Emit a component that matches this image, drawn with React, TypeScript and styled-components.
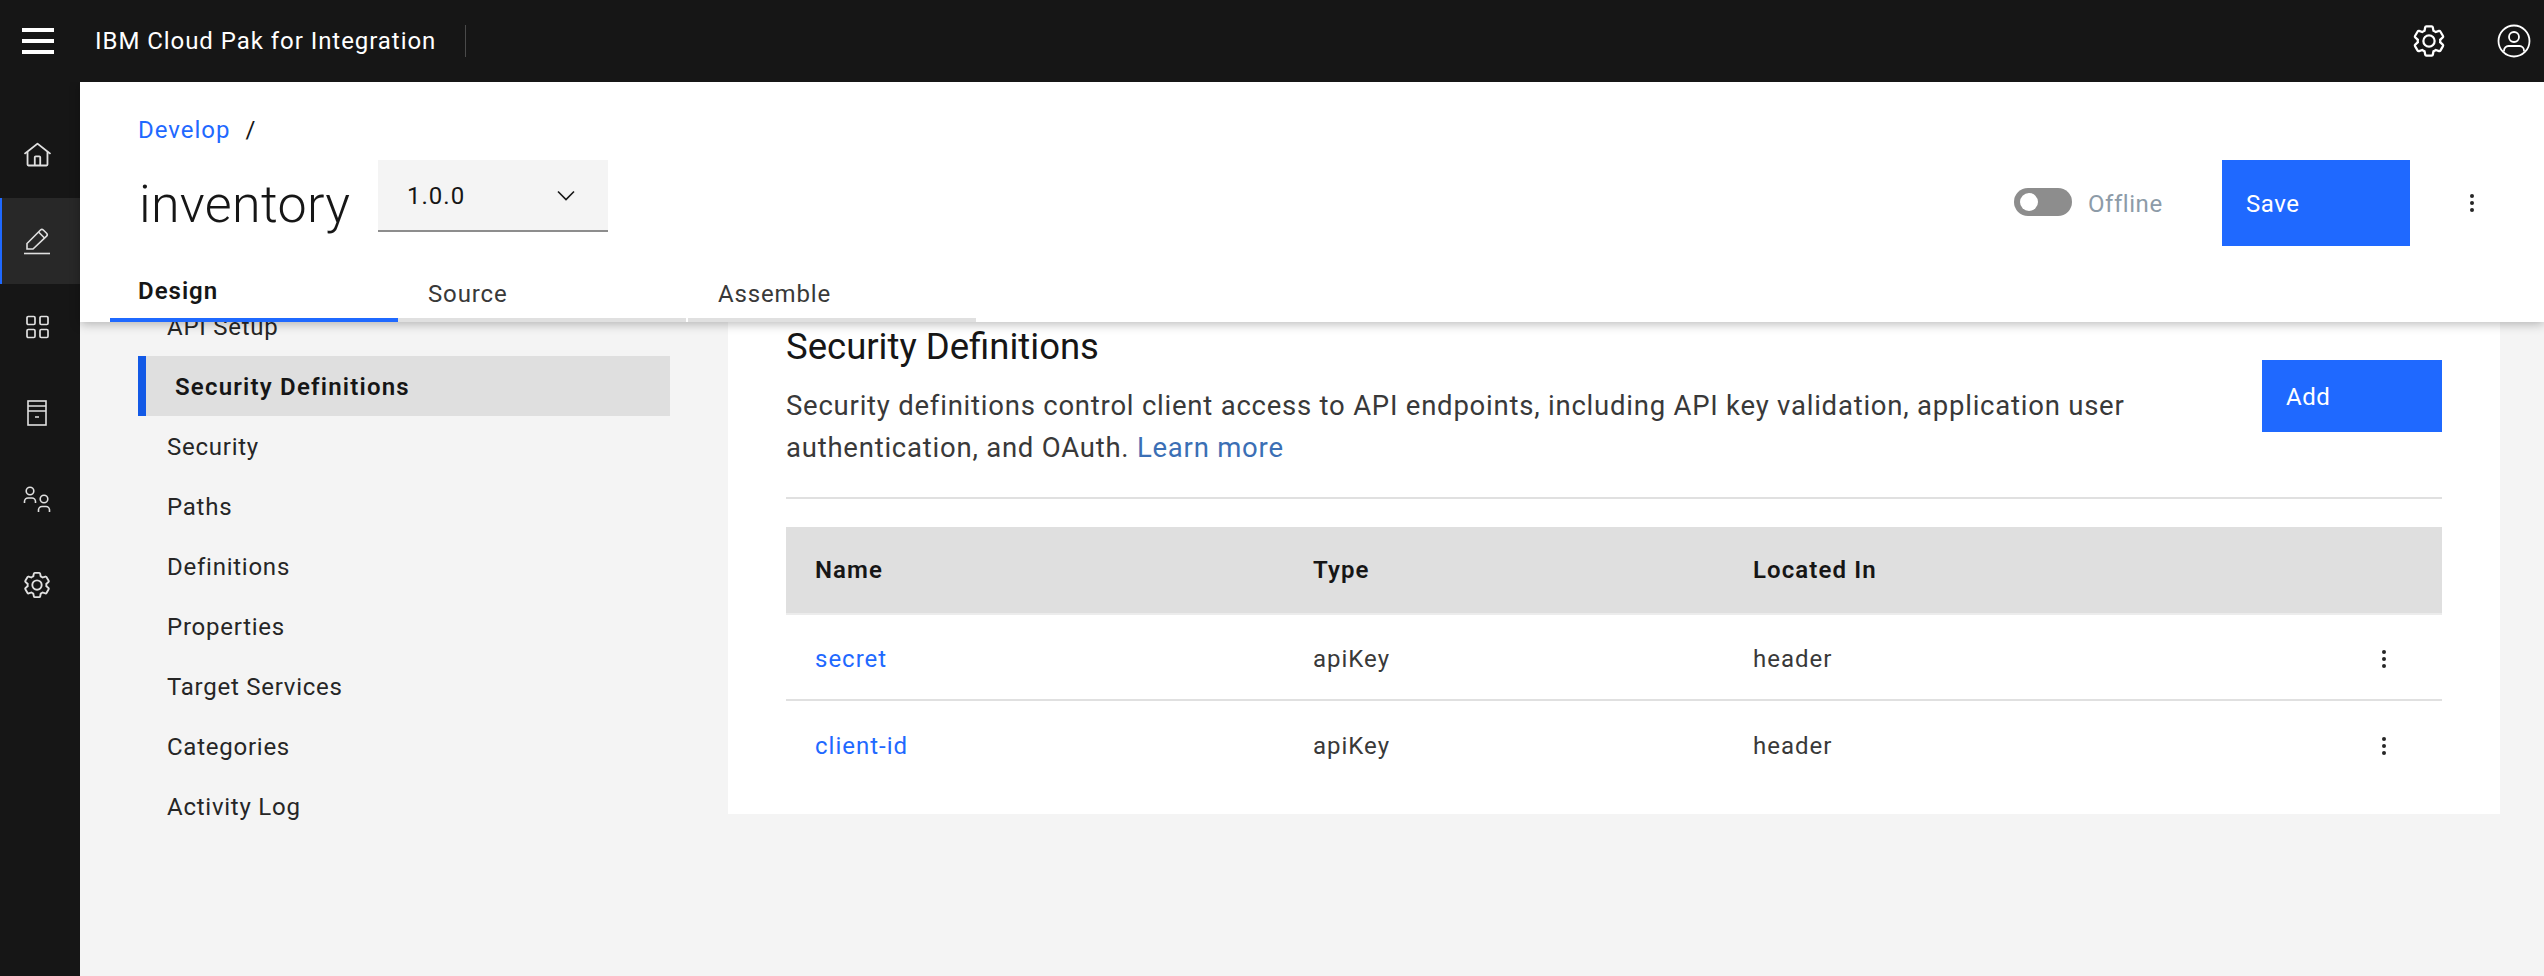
import React from "react";
import styled, { createGlobalStyle } from "styled-components";

const BLUE = "#1f69ff";

const Global = createGlobalStyle`
    html, body { margin: 0; padding: 0; background: #f4f4f4; }
    body { font-family: Roboto, "Liberation Sans", sans-serif; color: #161616; }
    * { box-sizing: border-box; }
`;

const Shell = styled.div`
    width: 2544px;
    height: 976px;
    display: flex;
    flex-direction: column;
    overflow: hidden;
`;

const TopBar = styled.header`
    height: 82px;
    flex: none;
    display: flex;
    align-items: center;
    background: #161616;
    color: #fff;
    position: relative;
    z-index: 3;
`;

const Burger = styled.div`
    width: 32px;
    height: 26px;
    margin: 0 41px 0 22px;
    display: flex;
    flex-direction: column;
    justify-content: space-between;
    span {
        height: 4px;
        background: #fff;
    }
`;

const Product = styled.div`
    width: 371px;
    font-size: 24px;
    letter-spacing: 0.95px;
    font-weight: 400;
    height: 32px;
    line-height: 32px;
    border-right: 1px solid #4a4a4a;
`;

const TopIcons = styled.div`
    margin-left: auto;
    display: flex;
    align-items: center;
    gap: 50px;
    padding-right: 13px;
`;

const Columns = styled.div`
    flex: 1;
    display: flex;
    min-height: 0;
`;

const Rail = styled.nav`
    width: 80px;
    flex: none;
    background: #161616;
    padding-top: 30px;
`;

const RailItem = styled.div<{ $active?: boolean }>`
    height: 86px;
    display: flex;
    align-items: center;
    justify-content: center;
    padding-right: 8px;
    color: #e0e0e0;
    background: ${(p) => (p.$active ? "#282828" : "transparent")};
    border-left: 2px solid ${(p) => (p.$active ? BLUE : "transparent")};
`;

const Main = styled.main`
    flex: 1;
    min-width: 0;
    background: #f4f4f4;
    display: flex;
    flex-direction: column;
`;

const PageHeader = styled.section`
    height: 240px;
    flex: none;
    background: #fff;
    box-shadow: 0 2px 10px rgba(0, 0, 0, 0.28);
    position: relative;
    z-index: 2;
    display: flex;
    flex-direction: column;
`;

const Crumbs = styled.div`
    margin: 33px 0 0 58px;
    height: 30px;
    line-height: 31px;
    font-size: 24px;
    letter-spacing: 1px;
    display: flex;
    gap: 15px;
    a {
        color: ${BLUE};
    }
`;

const TitleRow = styled.div`
    margin: 15px 0 0 59px;
    height: 86px;
    display: flex;
    align-items: flex-start;
`;

const PageTitle = styled.h1`
    margin: 0;
    width: 180px;
    font-size: 52px;
    letter-spacing: 0.3px;
    font-weight: 300;
    line-height: 86px;
    height: 86px;
    position: relative;
    top: 2px;
    color: #161616;
    white-space: nowrap;
`;

const VersionSelect = styled.div`
    margin-left: 59px;
    width: 230px;
    height: 72px;
    background: #f4f4f4;
    border-bottom: 2px solid #8d8d8d;
    padding: 2px 33px 0 29px;
    display: flex;
    align-items: center;
    justify-content: space-between;
    font-size: 24px;
    letter-spacing: 1px;
    color: #161616;
`;

const Actions = styled.div`
    margin-left: auto;
    display: flex;
    align-items: flex-start;
`;

const Toggle = styled.div`
    width: 58px;
    height: 28px;
    margin-top: 28px;
    border-radius: 14px;
    background: #8d8d8d;
    padding: 5px 6px;
    span {
        display: block;
        width: 18px;
        height: 18px;
        border-radius: 50%;
        background: #fff;
    }
`;

const ToggleLabel = styled.div`
    margin: 1px 59px 0 16px;
    width: 75px;
    line-height: 86px;
    height: 85px;
    font-size: 24px;
    letter-spacing: 0.55px;
    color: #8d9ba8;
    white-space: nowrap;
`;

const PrimaryButton = styled.div<{ $width: number; $height: number }>`
    width: ${(p) => p.$width}px;
    height: ${(p) => p.$height}px;
    background: ${BLUE};
    color: #fff;
    font-size: 24px;
    letter-spacing: 0.55px;
    display: flex;
    align-items: center;
    padding: 2px 0 0 24px;
    flex: none;
`;

const HeaderMenu = styled.div`
    width: 134px;
    height: 86px;
    display: flex;
    align-items: center;
    padding-left: 59px;
`;

const Tabs = styled.div`
    margin: auto 0 0 30px;
    display: flex;
    gap: 0;
`;

const Tab = styled.div<{ $active?: boolean; $gap?: boolean }>`
    width: 288px;
    height: 56px;
    margin-left: ${(p) => (p.$gap ? 2 : 0)}px;
    padding-left: ${(p) => (p.$active ? 28 : 30)}px;
    border-bottom: 4px solid ${(p) => (p.$active ? BLUE : "#e0e0e0")};
    line-height: ${(p) => (p.$active ? 50 : 56)}px;
    font-size: 24px;
    letter-spacing: ${(p) => (p.$active ? 1 : 0.85)}px;
    font-weight: ${(p) => (p.$active ? 600 : 400)};
    color: ${(p) => (p.$active ? "#161616" : "#393939")};
`;

const Body = styled.div`
    flex: 1;
    display: flex;
    align-items: flex-start;
    gap: 58px;
    padding: 0 44px 0 58px;
`;

const SideNav = styled.ul`
    list-style: none;
    margin: -26px 0 0;
    padding: 0;
    width: 532px;
    flex: none;
`;

const SideItem = styled.li<{ $active?: boolean }>`
    height: 60px;
    line-height: 62px;
    font-size: 24px;
    letter-spacing: ${(p) => (p.$active ? 1.2 : 0.75)}px;
    color: ${(p) => (p.$active ? "#161616" : "#262626")};
    font-weight: ${(p) => (p.$active ? 600 : 400)};
    padding-left: 29px;
    background: ${(p) => (p.$active ? "#dfdfdf" : "transparent")};
    border-left: ${(p) => (p.$active ? `8px solid #1259e6` : "none")};
`;

const Card = styled.section`
    flex: 1;
    min-width: 0;
    background: #fff;
    margin-top: -10px;
    height: 502px;
    padding: 13px 58px 0;
`;

const CardTop = styled.div`
    display: flex;
    justify-content: space-between;
    height: 174px;
    border-bottom: 2px solid #e0e0e0;
`;

const CardText = styled.div`
    width: 1360px;
`;

const CardTitle = styled.h2`
    margin: 0;
    font-size: 36.5px;
    font-weight: 400;
    line-height: 44px;
    color: #161616;
`;

const CardCopy = styled.p`
    margin: 16px 0 0;
    font-size: 27.5px;
    letter-spacing: 0.77px;
    line-height: 42px;
    color: #393939;
    a {
        color: #3b6fb5;
    }
`;

const AddSlot = styled.div`
    margin-top: 35px;
`;

const Table = styled.div`
    margin-top: 28px;
`;

const Row = styled.div<{ $head?: boolean }>`
    display: grid;
    grid-template-columns: 498px 440px 1fr 161px;
    height: ${(p) => (p.$head ? 88 : 86)}px;
    align-items: center;
    font-size: 24px;
    letter-spacing: ${(p) => (p.$head ? 1.1 : 1)}px;
    color: ${(p) => (p.$head ? "#161616" : "#393939")};
    font-weight: ${(p) => (p.$head ? 600 : 400)};
    background: ${(p) => (p.$head ? "#dfdfdf" : "transparent")};
    border-bottom: 2px solid ${(p) => (p.$head ? "#ececec" : "#e0e0e0")};
    &:last-child {
        border-bottom: none;
    }
`;

const Cell = styled.div<{ $nudge?: boolean }>`
    padding-left: 29px;
    padding-top: ${(p) => (p.$nudge ? 4 : 0)}px;
    a {
        color: ${BLUE};
    }
`;

const RowMenu = styled.div`
    display: flex;
    padding: 4px 0 0 100px;
`;

function Kebab({ size = 4 }: { size?: number }) {
    return (
        <svg width="6" height="24" viewBox="0 0 6 24" fill="#262626">
            <circle cx="3" cy="5" r={size / 2} />
            <circle cx="3" cy="12" r={size / 2} />
            <circle cx="3" cy="19" r={size / 2} />
        </svg>
    );
}

const gear =
    "M27,16.76c0-.25,0-.5,0-.76s0-.51,0-.77l1.92-1.68A2,2,0,0,0,29.3,11L26.94,7a2,2,0,0,0-1.73-1,2,2,0,0,0-.64.1l-2.43.82a11.35,11.35,0,0,0-1.31-.75l-.51-2.52a2,2,0,0,0-2-1.61H13.64a2,2,0,0,0-2,1.61l-.51,2.52a11.48,11.48,0,0,0-1.32.75L7.43,6.06A2,2,0,0,0,6.79,6,2,2,0,0,0,5.06,7L2.7,11a2,2,0,0,0,.41,2.51L5,15.24c0,.25,0,.5,0,.76s0,.51,0,.77L3.11,18.45A2,2,0,0,0,2.7,21L5.06,25a2,2,0,0,0,1.73,1,2,2,0,0,0,.64-.1l2.43-.82a11.35,11.35,0,0,0,1.31.75l.51,2.52a2,2,0,0,0,2,1.61h4.72a2,2,0,0,0,2-1.61l.51-2.52a11.48,11.48,0,0,0,1.32-.75l2.42.82a2,2,0,0,0,.64.1,2,2,0,0,0,1.73-1L29.3,21a2,2,0,0,0-.41-2.51ZM25.21,24l-3.43-1.16a8.86,8.86,0,0,1-2.71,1.57L18.36,28H13.64l-.71-3.55a9.36,9.36,0,0,1-2.7-1.57L6.79,24,4.43,20l2.72-2.4a8.9,8.9,0,0,1,0-3.13L4.43,12,6.79,8l3.43,1.16a8.86,8.86,0,0,1,2.71-1.57L13.64,4h4.72l.71,3.55a9.36,9.36,0,0,1,2.7,1.57L25.21,8,27.57,12l-2.72,2.4a8.9,8.9,0,0,1,0,3.13L27.57,20ZM16,22a6,6,0,1,1,6-6A5.94,5.94,0,0,1,16,22Zm0-10a3.91,3.91,0,0,0-4,4,3.91,3.91,0,0,0,4,4,3.91,3.91,0,0,0,4-4A3.91,3.91,0,0,0,16,12Z";

function GearIcon({ size }: { size: number }) {
    return (
        <svg width={size} height={size} viewBox="0 0 32 32" fill="currentColor">
            <path d={gear} />
        </svg>
    );
}

function HomeIcon() {
    return (
        <svg width="29" height="29" viewBox="0 0 32 32" fill="currentColor">
            <path d="M16.6123,2.2138a1.01,1.01,0,0,0-1.2427,0L1,13.4194l1.2427,1.5717L4,13.6209V26a2.0041,2.0041,0,0,0,2,2H26a2.0037,2.0037,0,0,0,2-2V13.63L29.7573,15,31,13.4282ZM18,26H14V18h4Zm2,0V18a2.0023,2.0023,0,0,0-2-2H14a2.002,2.002,0,0,0-2,2v8H6V12.0615l10-7.79,10,7.8005V26Z" />
        </svg>
    );
}

function PencilIcon() {
    return (
        <svg width="28" height="28" viewBox="0 0 28 28" fill="none" stroke="currentColor" strokeWidth="1.6">
            <path d="M1 26.5h26" />
            <path d="M4 22v-5.5L17.5 3 a2 2 0 0 1 2.8 0 L23.6 6.3 a2 2 0 0 1 0 2.8 L10 22Z" />
            <path d="M15.5 5l6 6" />
        </svg>
    );
}

function GridIcon() {
    return (
        <svg width="24" height="24" viewBox="0 0 24 24" fill="none" stroke="currentColor" strokeWidth="1.7">
            <rect x="2" y="1.5" width="8" height="8" rx="1.2" />
            <rect x="15" y="1.5" width="8" height="8" rx="1.2" />
            <rect x="2" y="14.5" width="8" height="8" rx="1.2" />
            <rect x="15" y="14.5" width="8" height="8" rx="1.2" />
        </svg>
    );
}

function ArchiveIcon() {
    return (
        <svg width="24" height="26" viewBox="0 0 24 26" fill="none" stroke="currentColor" strokeWidth="1.6">
            <rect x="3" y="1" width="18" height="24" />
            <path d="M3 6h18M3 11h18M10 17h4" />
        </svg>
    );
}

function UsersIcon() {
    return (
        <svg width="30" height="28" viewBox="0 0 30 28" fill="none" stroke="currentColor" strokeWidth="1.6">
            <circle cx="8" cy="6" r="3.8" />
            <path d="M2.5 18v-1.5a3.5 3.5 0 0 1 3.5-3.5h4a3.5 3.5 0 0 1 3.5 3.5V18" />
            <circle cx="22" cy="14" r="3.8" />
            <path d="M16.5 27v-2a3.5 3.5 0 0 1 3.5-3.5h4a3.5 3.5 0 0 1 3.5 3.5v2" />
        </svg>
    );
}

function UserIcon() {
    return (
        <svg width="34" height="34" viewBox="0 0 34 34" fill="none" stroke="currentColor" strokeWidth="1.8">
            <circle cx="17" cy="17" r="15.5" />
            <circle cx="17" cy="13" r="5" />
            <path d="M7 27.5v-1a4.5 4.5 0 0 1 4.5-4.5h11a4.5 4.5 0 0 1 4.5 4.5v1" />
        </svg>
    );
}

function Chevron() {
    return (
        <svg width="18" height="12" viewBox="0 0 18 12" fill="none" stroke="#161616" strokeWidth="1.6">
            <path d="M1 1.5l8 8 8-8" />
        </svg>
    );
}

const sideItems = [
    "API Setup",
    "Security Definitions",
    "Security",
    "Paths",
    "Definitions",
    "Properties",
    "Target Services",
    "Categories",
    "Activity Log",
];

const rows = ["secret", "client-id"];

export default function App() {
    return (
        <Shell>
            <Global />
            <TopBar>
                <Burger>
                    <span />
                    <span />
                    <span />
                </Burger>
                <Product>IBM Cloud Pak for Integration</Product>
                <TopIcons>
                    <GearIcon size={36} />
                    <UserIcon />
                </TopIcons>
            </TopBar>
            <Columns>
                <Rail>
                    <RailItem><HomeIcon /></RailItem>
                    <RailItem $active><PencilIcon /></RailItem>
                    <RailItem><GridIcon /></RailItem>
                    <RailItem><ArchiveIcon /></RailItem>
                    <RailItem><UsersIcon /></RailItem>
                    <RailItem><GearIcon size={30} /></RailItem>
                </Rail>
                <Main>
                    <PageHeader>
                        <Crumbs>
                            <a>Develop</a>
                            <span>/</span>
                        </Crumbs>
                        <TitleRow>
                            <PageTitle>inventory</PageTitle>
                            <VersionSelect>
                                1.0.0
                                <Chevron />
                            </VersionSelect>
                            <Actions>
                                <Toggle><span /></Toggle>
                                <ToggleLabel>Offline</ToggleLabel>
                                <PrimaryButton $width={188} $height={86}>Save</PrimaryButton>
                                <HeaderMenu><Kebab /></HeaderMenu>
                            </Actions>
                        </TitleRow>
                        <Tabs>
                            <Tab $active>Design</Tab>
                            <Tab>Source</Tab>
                            <Tab $gap>Assemble</Tab>
                        </Tabs>
                    </PageHeader>
                    <Body>
                        <SideNav>
                            {sideItems.map((item) => (
                                <SideItem key={item} $active={item === "Security Definitions"}>
                                    {item}
                                </SideItem>
                            ))}
                        </SideNav>
                        <Card>
                            <CardTop>
                                <CardText>
                                    <CardTitle>Security Definitions</CardTitle>
                                    <CardCopy>
                                        Security definitions control client access to API endpoints, including API key validation, application user authentication, and OAuth. <a>Learn more</a>
                                    </CardCopy>
                                </CardText>
                                <AddSlot>
                                    <PrimaryButton $width={180} $height={72}>Add</PrimaryButton>
                                </AddSlot>
                            </CardTop>
                            <Table>
                                <Row $head>
                                    <Cell>Name</Cell>
                                    <Cell>Type</Cell>
                                    <Cell>Located In</Cell>
                                    <span />
                                </Row>
                                {rows.map((name) => (
                                    <Row key={name}>
                                        <Cell $nudge><a>{name}</a></Cell>
                                        <Cell $nudge>apiKey</Cell>
                                        <Cell $nudge>header</Cell>
                                        <RowMenu><Kebab /></RowMenu>
                                    </Row>
                                ))}
                            </Table>
                        </Card>
                    </Body>
                </Main>
            </Columns>
        </Shell>
    );
}
